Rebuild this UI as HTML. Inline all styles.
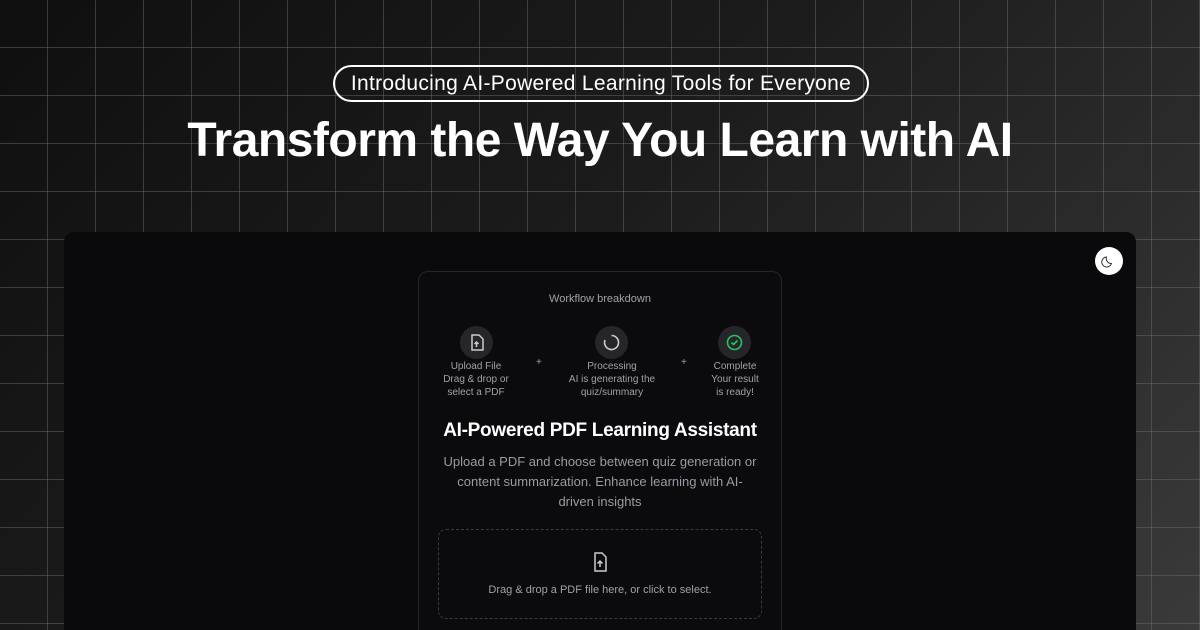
<!DOCTYPE html>
<html style="width:1200px;height:630px;overflow:hidden"><head><meta charset="utf-8"><style>
*{margin:0;padding:0;box-sizing:border-box}
body{width:1200px;height:630px;overflow:hidden;font-family:"Liberation Sans",sans-serif;position:relative;
background:linear-gradient(135deg,#0f0f0f 0%,#1c1c1c 45%,#3a3a3a 100%);}
.grid{position:absolute;inset:0;background-image:linear-gradient(to right,rgba(110,110,120,.45) 1px,transparent 1px),linear-gradient(to bottom,rgba(110,110,120,.45) 1px,transparent 1px);background-size:48px 48px;background-position:47px 47px;}
.pill{position:absolute;left:333px;top:65px;width:536px;height:37px;border:2px solid #fff;border-radius:20px;color:#fff;font-size:21px;letter-spacing:0.3px;text-align:center;line-height:33px;}
h1{position:absolute;left:0;width:1200px;top:113px;text-align:center;color:#fff;font-size:48px;font-weight:bold;letter-spacing:-0.5px}
.panel{position:absolute;left:64px;top:232px;width:1072px;height:398px;background:#0a0a0c;border-radius:10px 10px 0 0}
.moon{position:absolute;left:1095px;top:247px;width:28px;height:28px;border-radius:50%;background:#fff}
.card{position:absolute;left:418px;top:271px;width:364px;height:359px;border:1px solid #26262a;border-bottom:none;border-radius:10px 10px 0 0;background:#0b0b0d}
.t{position:absolute;color:#a0a0aa;font-size:10px;text-align:center;line-height:13px}
.ic{position:absolute;width:33px;height:33px;border-radius:50%;background:#26262a}
.drop{position:absolute;left:438px;top:529px;width:324px;height:90px;border:1px dashed #3a3a40;border-radius:8px}
</style></head><body>
<div class="grid"></div>
<div class="pill">Introducing AI-Powered Learning Tools for Everyone</div>
<h1>Transform the Way You Learn with AI</h1>
<div class="panel"></div>
<div class="moon"><svg width="28" height="28" viewBox="0 0 28 28"><path d="M16.5 16.5A5 5 0 0 1 11.5 10a5 5 0 1 0 5 6.5z" fill="none" stroke="#333" stroke-width="1"/></svg></div>
<div class="card"></div>
<div class="t" style="left:420px;width:360px;top:293px;font-size:11px">Workflow breakdown</div>
<div class="ic" style="left:460px;top:326px"><svg width="33" height="33" viewBox="0 0 33 33" fill="none" stroke="#ccc" stroke-width="1.5"><path d="M12 9h7l4 4v11h-11z"/><path d="M16.5 21v-5M14.5 18l2-2 2 2"/></svg></div>
<div class="ic" style="left:595px;top:326px"><svg width="33" height="33" viewBox="0 0 33 33" fill="none" stroke="#ccc" stroke-width="1.6"><path d="M16.5 9.5a7 7 0 1 1-6.5 4.5"/></svg></div>
<div class="ic" style="left:718px;top:326px"><svg width="33" height="33" viewBox="0 0 33 33" fill="none" stroke="#22c55e" stroke-width="1.6"><circle cx="16.5" cy="16.5" r="7"/><path d="M13.5 16.5l2 2 4-4"/></svg></div>
<div class="t" style="left:430px;width:92px;top:360px">Upload File<br>Drag &amp; drop or<br>select a PDF</div>
<div class="t" style="left:536px;top:356px">+</div>
<div class="t" style="left:560px;width:104px;top:360px">Processing<br>AI is generating the<br>quiz/summary</div>
<div class="t" style="left:681px;top:356px">+</div>
<div class="t" style="left:700px;width:70px;top:360px">Complete<br>Your result<br>is ready!</div>
<div style="position:absolute;left:418px;width:364px;top:420px;text-align:center;color:#fff;font-size:19px;font-weight:bold;letter-spacing:-0.3px">AI-Powered PDF Learning Assistant</div>
<div style="position:absolute;left:440px;width:320px;top:452px;text-align:center;color:#9a9aa4;font-size:13px;line-height:20px">Upload a PDF and choose between quiz generation or content summarization. Enhance learning with AI-driven insights</div>
<div class="drop"></div>
<svg style="position:absolute;left:588px;top:550px" width="24" height="24" viewBox="0 0 24 24" fill="none" stroke="#ccc" stroke-width="1.5"><path d="M7 3h7l4 4v14H7z"/><path d="M12 17v-6M9.5 13.5L12 11l2.5 2.5"/></svg>
<div class="t" style="left:438px;width:324px;top:584px;font-size:11px">Drag &amp; drop a PDF file here, or click to select.</div>
</body></html>
